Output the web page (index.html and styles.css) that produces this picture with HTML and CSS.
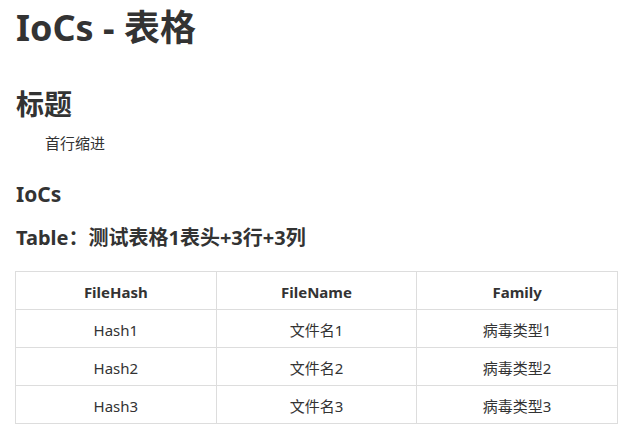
FILE: index.html
```html
<!DOCTYPE html>
<html lang="zh-CN">
<head>
<meta charset="utf-8">
<title>IoCs - 表格</title>
<link rel="stylesheet" href="styles.css">
</head>
<body>
<main class="doc">
  <h1 class="title">IoCs - 表格</h1>
  <h2 class="h2">标题</h2>
  <p class="para">首行缩进</p>
  <h3 class="h3">IoCs</h3>
  <h4 class="h4">Table：测试表格1表头+3行+3列</h4>
  <table class="grid">
    <thead>
      <tr><th>FileHash</th><th>FileName</th><th>Family</th></tr>
    </thead>
    <tbody>
      <tr><td>Hash1</td><td>文件名1</td><td>病毒类型1</td></tr>
      <tr><td>Hash2</td><td>文件名2</td><td>病毒类型2</td></tr>
      <tr><td>Hash3</td><td>文件名3</td><td>病毒类型3</td></tr>
    </tbody>
  </table>
</main>
</body>
</html>
```

FILE: styles.css
```css
html, body {
  margin: 0;
  padding: 0;
  background: #ffffff;
}
body {
  font-family: "Noto Sans", "Noto Sans CJK SC", sans-serif;
  color: #333333;
  font-size: 15px;
}
.doc {
  padding: 6px 24px 0 15px;
}
.title {
  font-size: 36px;
  font-weight: 700;
  line-height: 44px;
  margin: 0 0 0 1px;
}
.h2 {
  font-size: 28px;
  font-weight: 700;
  line-height: 36px;
  margin: 36px 0 0 1px;
}
.para {
  margin: 10px 0 0 0;
  text-indent: 30px;
  line-height: 22px;
  font-size: 15px;
}
.h3 {
  font-size: 21px;
  font-weight: 700;
  line-height: 28px;
  margin: 26px 0 0 1px;
}
.h4 {
  font-size: 20px;
  font-weight: 700;
  line-height: 28px;
  margin: 16px 0 0 1px;
}
.grid {
  margin-top: 19px;
  width: 603px;
  border-collapse: collapse;
  table-layout: fixed;
  font-size: 15px;
}
.grid th, .grid td {
  border: 1px solid #dddddd;
  height: 38px;
  padding: 2px 13px 0;
  text-align: center;
  box-sizing: border-box;
}
.grid th {
  font-weight: 700;
}
```
